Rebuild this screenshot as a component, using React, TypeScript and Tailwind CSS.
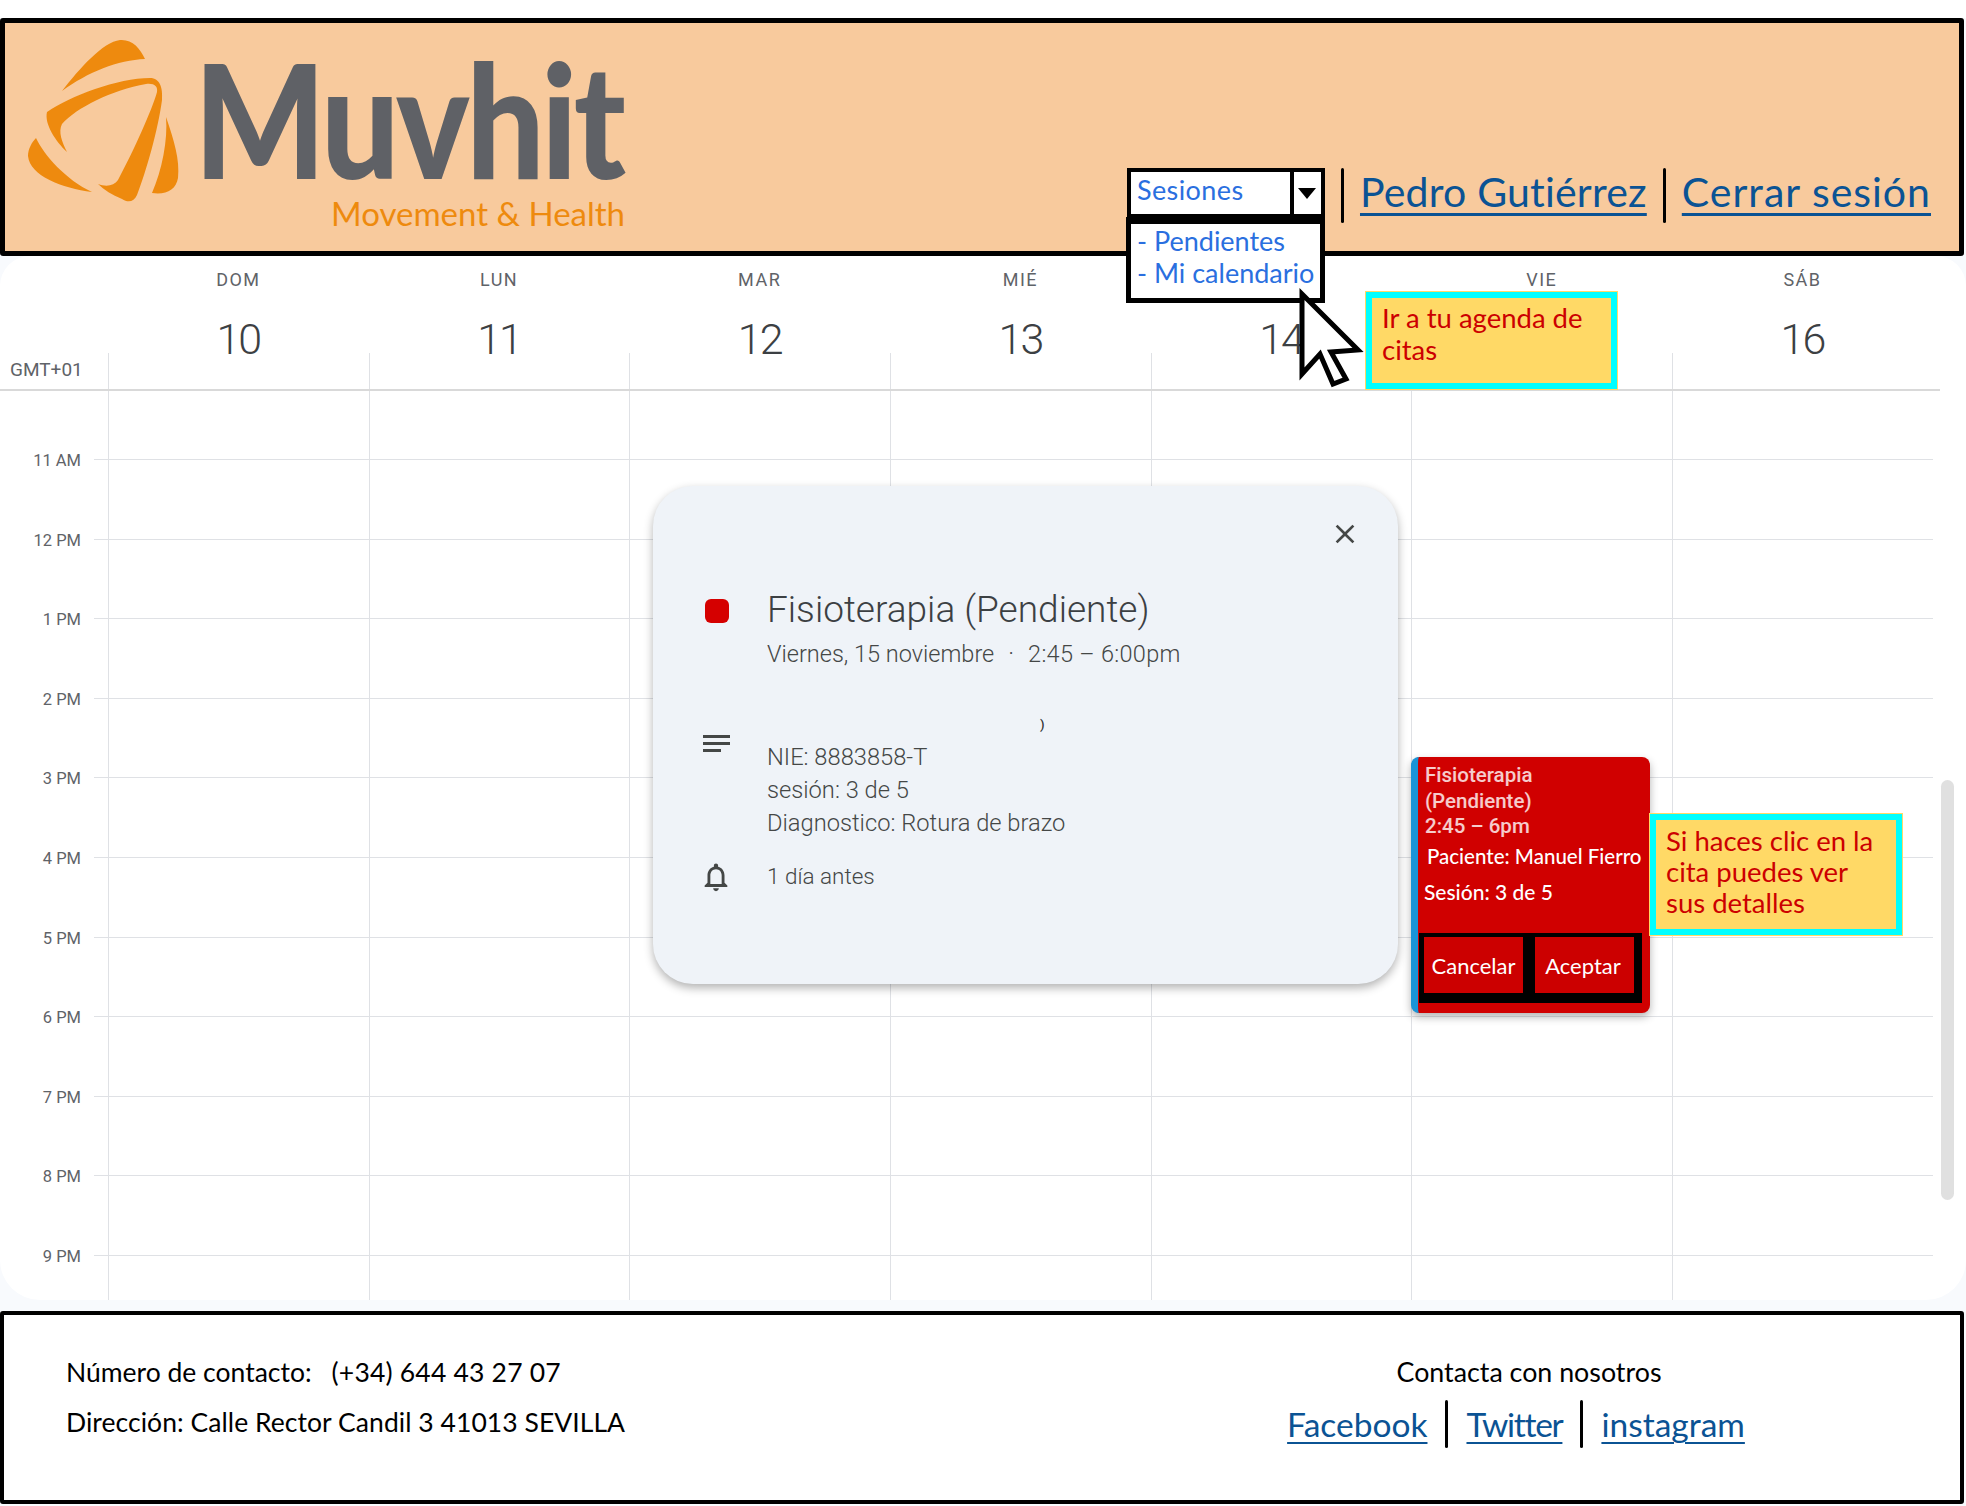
import React from "react";

const days = [
  ["DOM", "10"],
  ["LUN", "11"],
  ["MAR", "12"],
  ["MIÉ", "13"],
  ["", "14"],
  ["VIE", ""],
  ["SÁB", "16"],
];
const hours = ["11 AM", "12 PM", "1 PM", "2 PM", "3 PM", "4 PM", "5 PM", "6 PM", "7 PM", "8 PM", "9 PM"];
const hand = "[font-family:Lato,sans-serif]";
const g = "[font-family:Roboto,sans-serif]";

function Logo() {
  return (
    <svg width="160" height="170" viewBox="24 36 160 170" className="shrink-0">
      <g fill="#ee8a0e">
        <path d="M62 91 C80 68 103 42 120 40 C132 39 140 48 145 59 C118 60 88 72 62 91Z" />
        <path d="M47 112 C70 96 118 78 150 78 C160 78 163 88 162 100 C158 130 146 172 137 195 C134 202 128 203 122 199 C112 195 104 190 98 184 C106 187 114 186 118 180 C134 150 152 110 157 92 C158 86 154 83 146 84 C112 90 76 108 62 124 C58 132 62 142 67 152 C56 142 44 124 47 112Z" />
        <path d="M166 117 C174 140 180 160 178 178 C176 190 166 195 152 193 C162 170 168 140 166 117Z" />
        <path d="M36 138 C44 155 66 180 92 192 C62 188 30 176 28 156 C28 149 32 142 36 138Z" />
      </g>
    </svg>
  );
}

function Sep({ h = "h-[55px]" }: { h?: string }) {
  return <div className={`w-[3px] ${h} bg-black rounded-full shrink-0`} />;
}

function Header() {
  return (
    <header className={`h-[238px] w-[1964px] bg-[#f8ca9d] border-[5px] border-black rounded-[3px] flex justify-between items-end pl-[19px] pr-[28px] ${hand}`}>
      <div className="flex self-start mt-[13px] gap-[10px]">
        <Logo />
        <div className="flex flex-col items-end w-[431px]">
          <div className="text-[#5f6166] font-black text-[158px] leading-[132px] tracking-[-4px] mt-[16px] w-[431px] whitespace-nowrap origin-left scale-x-[0.877]">Muvhit</div>
          <div className="text-[#ee8a0e] text-[33px] leading-[34px] mt-[12px]">Movement &amp; Health</div>
        </div>
      </div>
      <nav className="flex items-start gap-[16px] pb-[28px]">
        <div className="w-[198px] h-[50px] bg-white border-[4px] border-black flex items-stretch">
          <div className="flex-1 text-[#2a6fdf] text-[27px] tracking-[0.4px] leading-[36px] pl-[6px]">Sesiones</div>
          <div className="w-[31px] border-l-[4px] border-black flex items-center justify-center">
            <svg width="18" height="11" viewBox="0 0 18 11"><path d="M0 0H18L9 11Z" fill="#000" /></svg>
          </div>
        </div>
        <Sep />
        <a className="text-[#0b5394] text-[41px] tracking-[0.2px] leading-[48px] underline underline-offset-[6px] decoration-[3px]">Pedro Gutiérrez</a>
        <Sep />
        <a className="text-[#0b5394] text-[41px] tracking-[1px] leading-[48px] underline underline-offset-[6px] decoration-[3px]">Cerrar sesión</a>
      </nav>
    </header>
  );
}

function Calendar() {
  return (
    <section className={`h-[1044px] bg-white rounded-b-[40px] rounded-t-[30px] overflow-hidden ${g}`}>
      <div className="h-[135px] border-b-2 border-[#d9d9d9] w-[1940px] flex items-end">
        <div className="w-[108px] h-[44px] pl-[10px] text-[19px] leading-[50px] text-[#5f6368] shrink-0">GMT+01</div>
        {days.map(([d, n], i) => (
          <div key={i} className="w-[260.7px] shrink-0 flex flex-col items-center">
            <div className="h-[24px] text-[18px] leading-[24px] tracking-[1.5px] text-[#5f6368] mb-[22px]">{d}</div>
            <div className="h-[50px] text-[43px] leading-[50px] text-[#3c4043] tracking-[-2px] font-light mb-[-11px]">{n}</div>
            <div className="w-full h-[36px] border-l border-[#dfe1e5]" />
          </div>
        ))}
      </div>
      <div className="h-[68px] flex">
        <div className="w-[108px] shrink-0" />
        {days.map((_, i) => (
          <div key={i} className="w-[260.7px] shrink-0 border-l border-[#dfe1e5]" />
        ))}
      </div>
      {hours.map((h) => (
        <div key={h} className="h-[79.6px] flex">
          <div className="w-[94px] shrink-0 text-right pr-[13px] text-[16.5px] leading-[24px] -mt-[10px] text-[#5f6368] h-[24px]">{h}</div>
          <div className="w-[14px] shrink-0 border-t border-[#dfe1e5]" />
          {days.map((_, i) => (
            <div key={i} className="w-[260.7px] shrink-0 border-l border-t border-[#dfe1e5]" />
          ))}
        </div>
      ))}
    </section>
  );
}

function Popover() {
  return (
    <div className={`absolute left-[653px] top-[486px] w-[745px] h-[498px] bg-[#eff3f8] rounded-[40px] shadow-[0_4px_10px_rgba(0,0,0,0.3)] text-[#444746] ${g}`}>
      <svg className="absolute right-[37px] top-[32px]" width="32" height="32" viewBox="0 0 24 24" fill="#444746">
        <path d="M19 6.41L17.59 5 12 10.59 6.41 5 5 6.41 10.59 12 5 17.59 6.41 19 12 13.41 17.59 19 19 17.59 13.41 12z" />
      </svg>
      <div className="flex pt-[101px] pl-[52px]">
        <div className="w-[24px] h-[24px] mt-[12px] rounded-[6px] bg-[#d50000] shrink-0" />
        <div className="ml-[38px]">
          <div className="text-[37px] leading-[46px] text-[#3c4043] font-light">Fisioterapia (Pendiente)</div>
          <div className="text-[23.5px] leading-[40px] font-light mt-[1px] whitespace-nowrap flex">
            <span>Viernes, 15 noviembre</span>
            <span className="ml-[14px]">·</span>
            <span className="ml-[14px] tracking-[0.3px]">2:45 – 6:00pm</span>
          </div>
        </div>
      </div>
      <div className="flex pl-[50px] mt-[50px]">
        <svg className="shrink-0 mt-[10px]" width="28" height="20" viewBox="0 0 28 20" fill="#444746">
          <rect x="0" y="1" width="27" height="3" />
          <rect x="0" y="8" width="27" height="3" />
          <rect x="0" y="15" width="18" height="3" />
        </svg>
        <div className="ml-[36px] text-[23.7px] font-light leading-[33px] pt-[17px]">
          <div>NIE: 8883858-T</div>
          <div>sesión: 3 de 5</div>
          <div>Diagnostico: Rotura de brazo</div>
        </div>
      </div>
      <div className="flex items-center pl-[46px] mt-[20px]">
        <svg width="34" height="34" viewBox="0 0 24 24" fill="#444746" className="shrink-0">
          <path d="M12 22c1.1 0 2-.9 2-2h-4c0 1.1.9 2 2 2zm6-6v-5c0-3.07-1.63-5.64-4.5-6.32V4c0-.83-.67-1.5-1.5-1.5s-1.5.67-1.5 1.5v.68C7.64 5.36 6 7.92 6 11v5l-2 2v1h16v-1l-2-2zm-2 1H8v-6c0-2.48 1.51-4.5 4-4.5s4 2.02 4 4.5v6z" />
        </svg>
        <div className="ml-[34px] text-[22.5px] font-light">1 día antes</div>
      </div>
      <div className="absolute left-[387px] top-[229px] text-[13px] font-medium text-[#333]">)</div>
    </div>
  );
}

function EventCard() {
  const btn = "bg-[#cc0000] border-black border-t-[4px] border-l-[5px] border-r-[8px] border-b-[10px] h-[70px] w-[112px] flex items-center justify-center text-white text-[22px]";
  return (
    <div className="absolute left-[1411px] top-[757px] w-[239px] h-[256px] bg-[#d00000] rounded-[8px] border-l-[7px] border-[#1a94d8] shadow-[0_4px_8px_rgba(0,0,0,0.3)] flex flex-col overflow-hidden">
      <div className={`${g} font-medium text-[20.5px] leading-[25.5px] text-white/80 pl-[7px] pt-[6px]`}>
        <div>Fisioterapia</div>
        <div>(Pendiente)</div>
        <div>2:45 – 6pm</div>
      </div>
      <div className={`${hand} text-white text-[20.5px] font-medium leading-[26px] pl-[9px] mt-[3px] whitespace-nowrap`}>Paciente: Manuel Fierro</div>
      <div className={`${hand} text-white text-[21px] font-medium leading-[26px] pl-[6px] mt-[10px]`}>Sesión: 3 de 5</div>
      <div className={`${hand} flex mt-auto mb-[10px] pl-[1px] -space-x-[1px]`}>
        <div className={btn}>Cancelar</div>
        <div className={`${btn} pr-[3px]`}>Aceptar</div>
      </div>
    </div>
  );
}

function Note({ className, children }: { className: string; children: React.ReactNode }) {
  return (
    <div className={`absolute bg-[#ffd966] border-[6px] border-[#00ffff] outline outline-1 outline-[#ffd966] text-[#cc0000] text-[27.5px] ${hand} ${className}`}>
      {children}
    </div>
  );
}

function Footer() {
  return (
    <footer className={`h-[193px] w-[1964px] mt-[11px] bg-white border-[4px] border-black rounded-[3px] flex justify-between text-black ${hand}`}>
      <div className="pl-[62px] pt-[32px] text-[26.5px] leading-[50px]">
        <div className="flex gap-[20px]"><span>Número de contacto:</span><span className="tracking-[0.2px]">(+34) 644 43 27 07</span></div>
        <div className="tracking-[0.05px]">Dirección: Calle Rector Candil 3 41013 SEVILLA</div>
      </div>
      <div className="w-[458px] mr-[202px] pt-[32px] flex flex-col items-center">
        <div className="text-[26.8px] leading-[50px]">Contacta con nosotros</div>
        <div className="flex items-center gap-[18px] text-[33.5px] text-[#0b5394] mt-[2px] -ml-[26px]">
          <a className="underline underline-offset-[5px] decoration-[2px]">Facebook</a>
          <Sep h="h-[48px]" />
          <a className="underline underline-offset-[5px] decoration-[2px] tracking-[-1.3px]">Twitter</a>
          <Sep h="h-[48px]" />
          <a className="underline underline-offset-[5px] decoration-[2px]">instagram</a>
        </div>
      </div>
    </footer>
  );
}

export default function App() {
  return (
    <div className="relative w-[1966px] h-[1506px] bg-[#f8fafd] overflow-hidden">
      <div className="h-[18px] bg-white" />
      <Header />
      <Calendar />
      <Footer />
      <Popover />
      <EventCard />
      <div className="absolute left-[1941px] top-[780px] w-[13px] h-[420px] rounded-full bg-[#e0e0e0]" />
      {/* dropdown menu */}
      <div className={`absolute left-[1126px] top-[217px] w-[199px] h-[86px] bg-white border-[5px] border-t-[7px] border-black pl-[6px] pt-[1px] text-[#2a6fdf] text-[27px] leading-[32px] ${hand}`}>
        <div>- Pendientes</div>
        <div className="whitespace-nowrap">- Mi calendario</div>
      </div>
      {/* cursor */}
      <svg className="absolute left-[1290px] top-[280px]" width="80" height="110" viewBox="1290 280 80 110">
        <path d="M1302 294 L1358 350 L1331 352 L1346 379 L1333 384 L1320 354 L1302 374 Z" fill="#fff" stroke="#000" strokeWidth="5" strokeLinejoin="miter" />
      </svg>
      <Note className="left-[1366px] top-[292px] w-[251px] h-[97px] pl-[10px] pt-[4px] leading-[32px]">
        Ir a tu agenda de<br />citas
      </Note>
      <Note className="left-[1650px] top-[814px] w-[252px] h-[121px] pl-[10px] pt-[5px] leading-[31px]">
        Si haces clic en la<br />cita puedes ver<br />sus detalles
      </Note>
    </div>
  );
}
